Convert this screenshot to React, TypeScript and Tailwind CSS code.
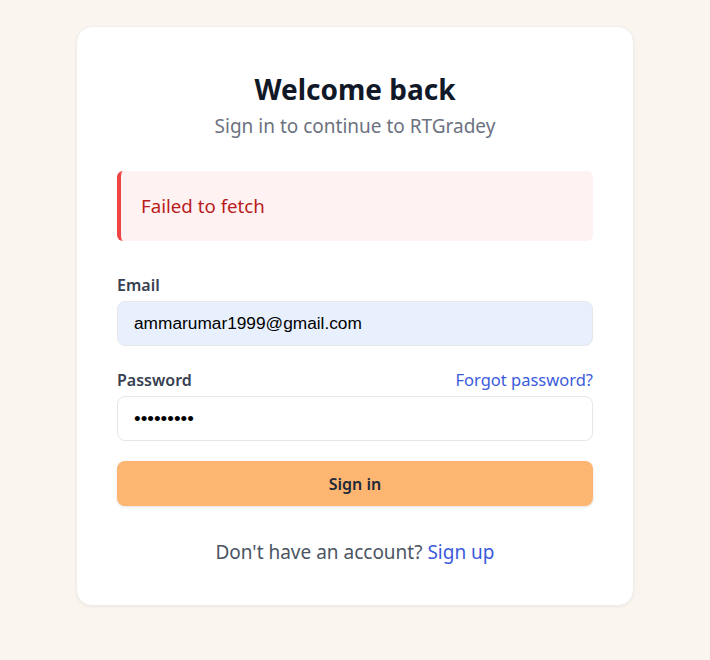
import React from 'react';

export default function App() {
  return (
    <div
      className="min-h-[660px] w-full bg-[#faf6ef] pt-[26px]"
      style={{ fontFamily: '"Noto Sans", "Open Sans", sans-serif' }}
    >
      <div className="mx-auto w-[558px] rounded-2xl bg-white px-10 pt-[44px] pb-[39px] shadow-[0_1px_3px_rgba(0,0,0,0.06)] border border-[#f1eee8]">
        <div className="text-center">
          <h1 className="text-[28px] font-bold leading-9 text-[#111827]">Welcome back</h1>
          <p className="mt-[5px] text-[19px] leading-7 text-[#6b7280]">Sign in to continue to RTGradey</p>
        </div>

        <div className="mt-[31px] rounded-md border-l-4 border-[#ef4444] bg-[#fef2f2] px-5 py-[23px]">
          <p className="text-[18.7px] leading-6 text-[#b91c1c]">Failed to fetch</p>
        </div>

        <form className="mt-[32px]" onSubmit={(e) => e.preventDefault()}>
          <label className="block text-[16px] font-semibold leading-6 text-[#374151]">Email</label>
          <input
            type="email"
            defaultValue="ammarumar1999@gmail.com"
            className="mt-[4px] block h-[45px] w-full rounded-lg border border-[#e5e7eb] bg-[#e8f0fe] px-4 text-[17.3px] text-black outline-none"
            style={{ fontFamily: '"Liberation Sans", Arial, sans-serif' }}
          />

          <div className="mt-[22px] flex items-center justify-between">
            <label className="text-[16px] font-semibold leading-6 text-[#374151]">Password</label>
            <a href="#" className="text-[16.5px] leading-6 text-[#3b5bdb]">Forgot password?</a>
          </div>
          <input
            type="password"
            defaultValue="123456789"
            className="mt-[4px] block h-[45px] w-full rounded-lg border border-[#e5e7eb] bg-white px-4 text-[19px] text-black outline-none"
            style={{ fontFamily: '"Liberation Sans", Arial, sans-serif' }}
          />

          <button
            type="submit"
            className="mt-[20px] h-[45px] w-full rounded-lg bg-[#fdb572] text-[16px] font-semibold text-[#1f2937] shadow-[0_1px_3px_rgba(0,0,0,0.12)]"
          >
            Sign in
          </button>
        </form>

        <p className="mt-[32px] text-center text-[19px] leading-7 text-[#4b5563]">
          Don't have an account? <a href="#" className="text-[#3b5bdb]">Sign up</a>
        </p>
      </div>
    </div>
  );
}
